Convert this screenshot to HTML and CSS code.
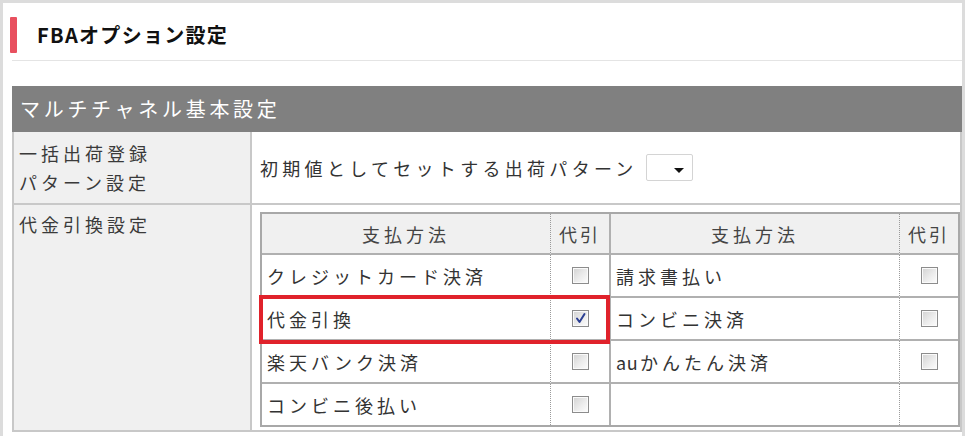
FILE: index.html
```html
<!DOCTYPE html>
<html lang="ja">
<head>
<meta charset="utf-8">
<link rel="stylesheet" href="styles.css">
</head>
<body>
<div class="page">
  <div class="head">
    <span class="bar"></span>
    <h1 class="title">FBAオプション設定</h1>
  </div>
  <div class="rule"></div>

  <div class="section">
    <div class="section-title">マルチチャネル基本設定</div>
    <div class="grid">
      <div class="label first">一括出荷登録<br>パターン設定</div>
      <div class="value first-val">
        <span class="txt">初期値としてセットする出荷パターン</span>
        <span class="select"><span class="arrow"></span></span>
      </div>
      <div class="label second">代金引換設定</div>
      <div class="value second-val">
        <div class="inner">
          <div class="c h c1">支払方法</div>
          <div class="c h c2">代引</div>
          <div class="c h c3">支払方法</div>
          <div class="c h c4">代引</div>

          <div class="c c1 l">クレジットカード決済</div>
          <div class="c c2"><span class="cb"></span></div>
          <div class="c c3 l">請求書払い</div>
          <div class="c c4"><span class="cb"></span></div>

          <div class="c c1 l">代金引換</div>
          <div class="c c2"><span class="cb checked"><svg viewBox="0 0 13 13" width="13" height="13"><path d="M3 6.5 L5.5 10 L10.5 2" fill="none" stroke="#2b3f93" stroke-width="2" stroke-linecap="round" stroke-linejoin="round"/></svg></span></div>
          <div class="c c3 l">コンビニ決済</div>
          <div class="c c4"><span class="cb"></span></div>

          <div class="c c1 l">楽天バンク決済</div>
          <div class="c c2"><span class="cb"></span></div>
          <div class="c c3 l"><span class="latin">au</span>かんたん決済</div>
          <div class="c c4"><span class="cb"></span></div>

          <div class="c c1 l last">コンビニ後払い</div>
          <div class="c c2 last"><span class="cb"></span></div>
          <div class="c c3 l last"></div>
          <div class="c c4 last"></div>

          <div class="highlight"></div>
        </div>
      </div>
    </div>
  </div>
</div>
</body>
</html>
```

FILE: styles.css
```css
html, body {
  margin: 0;
  padding: 0;
}
body {
  background: #dcdcdc;
  font-family: "Noto Sans CJK JP", "Noto Sans", sans-serif;
  color: #333;
  height: 436px;
  overflow: hidden;
}
.page {
  margin: 3px 3px 0 3px;
  background: #fff;
  height: 433px;
}
.head {
  display: flex;
  align-items: center;
  padding: 14px 0 0 7px;
  height: 36px;
}
.bar {
  width: 7px;
  height: 36px;
  background: #e8505f;
  border-radius: 1px;
}
.title {
  margin: 0 0 0 20px;
  font-size: 20px;
  font-weight: bold;
  color: #111;
  letter-spacing: 1.3px;
  line-height: 36px;
}
.rule {
  margin: 7px 0 0 9px;
  height: 1px;
  background: #e4e4e4;
}
.section {
  margin: 25px 0 0 9px;
  width: 950px;
}
.section-title {
  height: 46px;
  background: #808080;
  color: #fff;
  font-size: 20px;
  letter-spacing: 3.7px;
  line-height: 46px;
  padding-left: 8px;
}
.grid {
  display: grid;
  grid-template-columns: 238px 1fr;
  grid-template-rows: 73px 227px;
  border-left: 2px solid #c8c8c8;
  border-right: 2px solid #c8c8c8;
  box-sizing: border-box;
}
.label {
  background: #f0f0f0;
  border-right: 2px solid #c8c8c8;
  border-bottom: 2px solid #c8c8c8;
  font-size: 18px;
  letter-spacing: 4px;
  line-height: 29px;
  padding: 0 0 0 5px;
  color: #3a3a3a;
}
.label.first {
  display: flex;
  flex-direction: column;
  justify-content: center;
}
.label.second {
  padding-top: 5px;
}
.value {
  border-bottom: 2px solid #c8c8c8;
  padding-left: 8px;
}
.first-val {
  display: flex;
  align-items: center;
  font-size: 18px;
  letter-spacing: 4.3px;
  color: #333;
}
.select {
  margin-left: 8px;
  width: 47px;
  height: 27px;
  box-sizing: border-box;
  border: 1px solid #d4d4d4;
  border-radius: 2px;
  position: relative;
  background: #fff;
}
.arrow {
  position: absolute;
  right: 8px;
  top: 13px;
  width: 0;
  height: 0;
  border-left: 5px solid transparent;
  border-right: 5px solid transparent;
  border-top: 5px solid #111;
}
.second-val {
  padding-top: 7px;
}
.inner {
  position: relative;
  width: 700px;
  height: 215px;
  box-sizing: border-box;
  border: 2px solid #a8a8a8;
  display: grid;
  grid-template-columns: 289px 60px 289px 1fr;
  grid-template-rows: 41px 43px 43px 43px 41px;
}
.c {
  box-sizing: border-box;
  border-bottom: 2px solid #b0b0b0;
  font-size: 18px;
  letter-spacing: 4px;
  display: flex;
  align-items: center;
  justify-content: center;
  color: #333;
}
.c.last {
  border-bottom: none;
}
.c.l {
  justify-content: flex-start;
  padding-left: 5px;
}
.latin {
  letter-spacing: 0.5px;
  margin-right: 2px;
}
.c.h {
  background: #f0f0f0;
  color: #444;
}
.c2.h, .c4.h {
  letter-spacing: 3px;
}
.c1, .c3 {
  border-right: 1px dotted #9a9a9a;
}
.c2 {
  border-right: 2px solid #b0b0b0;
}
.cb {
  width: 17px;
  height: 17px;
  box-sizing: border-box;
  border: 1px solid #8c8c8c;
  box-shadow: inset 0 0 0 1px #fafafa;
  background: linear-gradient(135deg, #d2d2d2 0%, #ececec 55%, #fdfdfd 100%);
  display: flex;
  align-items: center;
  justify-content: center;
  margin-left: 1px;
}
.cb svg {
  display: block;
}
.highlight {
  position: absolute;
  left: -3px;
  top: 81px;
  width: 351px;
  height: 49px;
  box-sizing: border-box;
  border: 4px solid #e0222b;
  pointer-events: none;
}
```
